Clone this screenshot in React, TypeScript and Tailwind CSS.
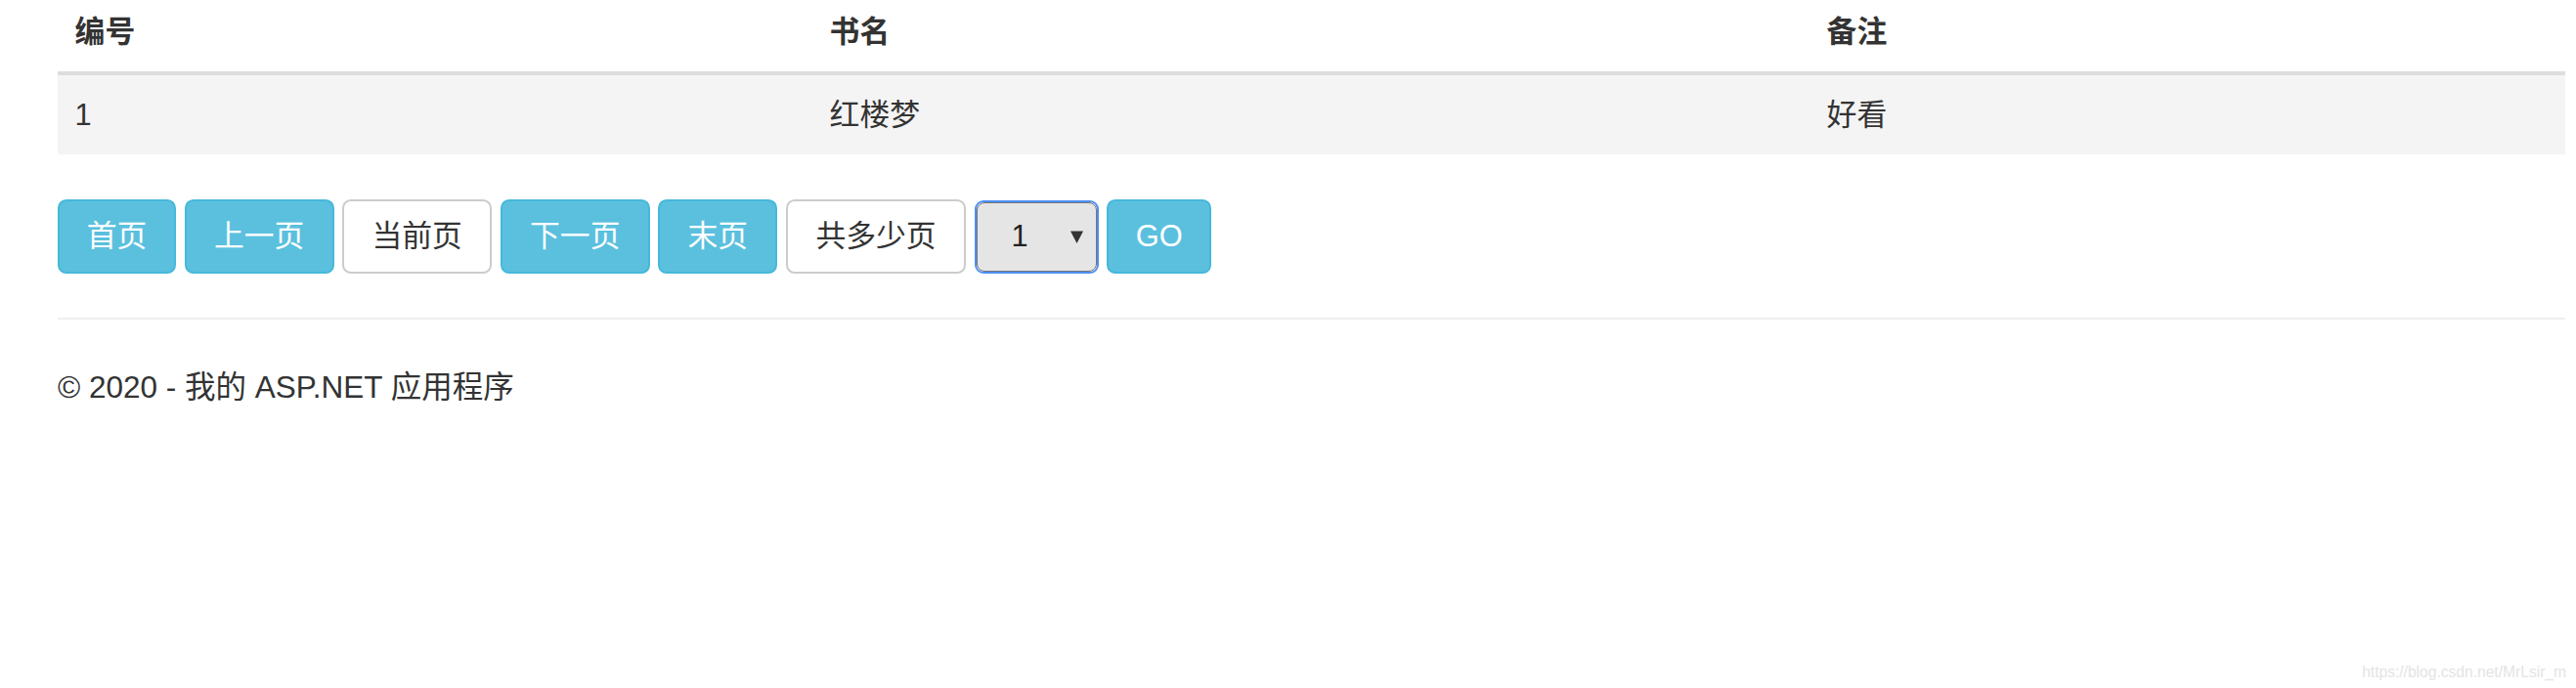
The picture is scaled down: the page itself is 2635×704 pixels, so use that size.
import React from "react";

const FONT = "font-['Liberation_Sans','Noto_Sans_CJK_SC',sans-serif]";

const rows = [{ id: "1", name: "红楼梦", note: "好看" }];

type Btn = { label: string; w: string; info: boolean };

const BUTTONS_LEFT: Btn[] = [
  { label: "首页", w: "w-[121px]", info: true },
  { label: "上一页", w: "w-[153px]", info: true },
  { label: "当前页", w: "w-[153px]", info: false },
  { label: "下一页", w: "w-[153px]", info: true },
  { label: "末页", w: "w-[122px]", info: true },
  { label: "共多少页", w: "w-[184px]", info: false },
];

function PagerButton({ label, w, info }: Btn) {
  return (
    <button
      className={`${w} h-[76px] flex items-center justify-center rounded-[8.8px] border-[2.2px] text-[30.8px] leading-[44px] ${
        info ? "bg-[#5bc0de] border-[#46b8da] text-white" : "bg-white border-[#cccccc] text-[#333333]"
      }`}
    >
      {label}
    </button>
  );
}

export default function App() {
  return (
    <div className={`relative h-[704px] w-full bg-white text-[#333333] ${FONT}`}>
      <div className="ml-[59px] mr-[11px]">
        {/* Table */}
        <div className="grid grid-cols-[772px_1020px_1fr] border-b-[4.4px] border-[#dddddd]">
          <div className="pl-[17.6px] pt-[11px] pb-[18px] text-[30.8px] leading-[44px] font-bold">编号</div>
          <div className="pl-[17.6px] pt-[11px] pb-[18px] text-[30.8px] leading-[44px] font-bold">书名</div>
          <div className="pl-[17.6px] pt-[11px] pb-[18px] text-[30.8px] leading-[44px] font-bold">备注</div>
        </div>
        {rows.map((r) => (
          <div key={r.id} className="grid grid-cols-[772px_1020px_1fr] bg-[#f4f4f4]">
            <div className="pl-[17.6px] py-[18.5px] text-[30.8px] leading-[44px]">{r.id}</div>
            <div className="pl-[17.6px] py-[18.5px] text-[30.8px] leading-[44px]">{r.name}</div>
            <div className="pl-[17.6px] py-[18.5px] text-[30.8px] leading-[44px]">{r.note}</div>
          </div>
        ))}

        {/* Pager */}
        <div className="mt-[46px] flex items-center gap-[8.6px]">
          {BUTTONS_LEFT.map((b) => (
            <PagerButton key={b.label} {...b} />
          ))}
          <div className="w-[127px] h-[75px] rounded-[9px] border-2 border-[#4d8ff5] p-0">
            <div className="h-full w-full rounded-[8px] border-[1.5px] border-[#767676] bg-[#e5e5e5] flex items-center pl-[35px] pr-[13px]">
              <span className="text-[30.8px] leading-[44px] text-[#222222]">1</span>
              <svg className="ml-auto" width="13" height="13" viewBox="0 0 13 13">
                <path d="M0 0.5 L13 0.5 L6.5 13 Z" fill="#333333" />
              </svg>
            </div>
          </div>
          <button className="w-[107px] h-[76px] flex items-center justify-center rounded-[8.8px] border-[2.2px] bg-[#5bc0de] border-[#46b8da] text-white text-[30.8px] leading-[44px]">
            GO
          </button>
        </div>

        {/* Footer */}
        <hr className="mt-[45px] border-0 border-t-[2.2px] border-[#eeeeee]" />
        <footer className="mt-[47px]">
          <p className="text-[31.5px] leading-[44px]">© 2020 - 我的 ASP.NET 应用程序</p>
        </footer>
      </div>

      {/* Watermark */}
      <span className="absolute right-[10px] bottom-[6px] text-[15.6px] leading-[20px] text-[#e4e4e4] font-['Liberation_Sans',sans-serif]">
        https://blog.csdn.net/MrLsir_m
      </span>
    </div>
  );
}
